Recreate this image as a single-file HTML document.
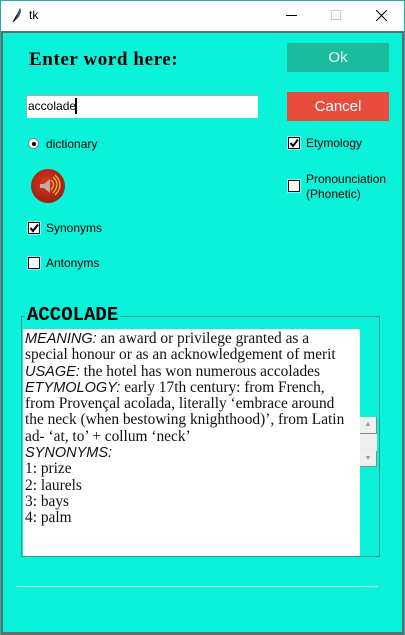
<!DOCTYPE html>
<html><head><style>
*{margin:0;padding:0;box-sizing:border-box}
body{width:405px;height:635px;background:#fff;position:relative;overflow:hidden;font-family:"Liberation Sans",sans-serif}
.a{position:absolute}
.t{font-size:12px;color:#000;white-space:nowrap}
.cb{position:absolute;width:12px;height:12px;background:#fff;border:1px solid #000;box-shadow:0 0 0 1px #8ee}
.cb svg{position:absolute;left:0;top:0}
.txt{font-family:"Liberation Serif",serif;font-size:15.4px;line-height:16.3px;color:#111;white-space:nowrap}
.txt i{font-family:"Liberation Sans",sans-serif;font-size:14.5px}
</style></head><body>
<div class="a" style="left:0;top:0;width:405px;height:1px;background:#1ab3a0"></div>
<div class="a" style="left:0;top:0;width:1px;height:635px;background:#1ab3a0"></div>
<div class="a" style="left:404px;top:0;width:1px;height:635px;background:#1ab3a0"></div>
<svg class="a" style="left:12px;top:7px" width="10" height="16" viewBox="0 0 10 16"><path d="M2 14 L8 2 Q9 6 6 10 L3 13Z" fill="#3a6fd8" stroke="#123" stroke-width="0.8"/><line x1="1" y1="15" x2="5" y2="8" stroke="#000" stroke-width="1"/></svg>
<div class="a t" style="left:29px;top:8px;font-size:12px">tk</div>
<div class="a" style="left:286px;top:15px;width:11px;height:1px;background:#000"></div>
<div class="a" style="left:331px;top:10px;width:10px;height:10px;border:1px solid #ccc"></div>
<svg class="a" style="left:376px;top:10px" width="11" height="11"><path d="M0 0L11 11M11 0L0 11" stroke="#000" stroke-width="1"/></svg>
<div class="a" style="left:1px;top:31px;width:403px;height:604px;background:#5f6f6c"></div>
<div class="a" style="left:3px;top:33px;width:399px;height:599px;background:#0af2d9"></div>

<div class="a" style="left:29px;top:49px;font-family:'Liberation Serif',serif;font-weight:bold;font-size:19px;letter-spacing:0.6px;white-space:nowrap">Enter word here:</div>
<div class="a" style="left:287px;top:43px;width:102px;height:29px;background:#1abc9c;color:#eef;font-size:15px;text-align:center;line-height:29px">Ok</div>
<div class="a" style="left:287px;top:92px;width:102px;height:29px;background:#e74c3c;color:#fff;font-size:15px;text-align:center;line-height:29px">Cancel</div>
<div class="a" style="left:26px;top:95px;width:232px;height:23px;background:#fff;border-top:1px solid #aaa;border-left:1px solid #aaa"></div>
<div class="a t" style="left:28px;top:99px">accolade</div>
<div class="a" style="left:75px;top:98px;width:1.5px;height:16px;background:#000"></div>

<div class="a" style="left:28px;top:138px;width:11px;height:11px;border-radius:50%;background:#fff;border:1px solid #888"></div>
<div class="a" style="left:31.5px;top:141.5px;width:4px;height:4px;border-radius:50%;background:#000"></div>
<div class="a t" style="left:46px;top:137px">dictionary</div>

<div class="a" style="left:31px;top:169px;width:34px;height:34px;border-radius:50%;background:radial-gradient(circle at 45% 40%,#d23a1e,#a0200e 70%,#7a1808)"></div>
<svg class="a" style="left:36px;top:174px" width="26" height="24" viewBox="0 0 26 24"><path d="M4 10h4l6-5v14l-6-5H4z" fill="#c8a89a"/><path d="M15 6q5 4 0 10M17 3q8 7 0 16M19 1q10 10 0 20" stroke="#e8b040" stroke-width="1.3" fill="none"/></svg>

<div class="cb" style="left:28px;top:222px"><svg width="10" height="10"><path d="M1.5 5l2.5 3 5-6.5" stroke="#000" stroke-width="2" fill="none"/></svg></div>
<div class="a t" style="left:46px;top:221px">Synonyms</div>
<div class="cb" style="left:28px;top:257px"></div>
<div class="a t" style="left:46px;top:256px">Antonyms</div>

<div class="cb" style="left:288px;top:137px"><svg width="10" height="10"><path d="M1.5 5l2.5 3 5-6.5" stroke="#000" stroke-width="2" fill="none"/></svg></div>
<div class="a t" style="left:306px;top:136px">Etymology</div>
<div class="cb" style="left:288px;top:180px"></div>
<div class="a t" style="left:306px;top:172px;line-height:15px">Pronounciation<br>(Phonetic)</div>

<div class="a" style="left:21px;top:316px;width:359px;height:241px;border:1px solid #2a9a8e"></div>
<div class="a" style="left:25px;top:304px;padding:0 2px;background:#0af2d9;font-family:'Liberation Mono',monospace;font-weight:bold;font-size:19px;line-height:22px">ACCOLADE</div>
<div class="a" style="left:23px;top:329px;width:337px;height:227px;background:#fff"></div>
<div class="a txt" style="left:25px;top:331px">
<i>MEANING:</i> an award or privilege granted as a<br>special honour or as an acknowledgement of merit<br><i>USAGE:</i> the hotel has won numerous accolades<br><i>ETYMOLOGY:</i> early 17th century: from French,<br>from Provençal acolada, literally ‘embrace around<br>the neck (when bestowing knighthood)’, from Latin<br>ad- ‘at, to’ + collum ‘neck’<br><i>SYNONYMS:</i><br>1: prize<br>2: laurels<br>3: bays<br>4: palm</div>
<div class="a" style="left:360px;top:417px;width:17px;height:50px;background:#eee"></div>
<div class="a" style="left:360px;top:417px;width:17px;height:17px;background:#f0f0f0;border-right:1px solid #888;border-bottom:1px solid #888;text-align:center;font-size:7px;color:#999;line-height:16px">▲</div>
<div class="a" style="left:360px;top:451px;width:17px;height:16px;background:#f0f0f0;border-right:1px solid #888;border-bottom:1px solid #888;text-align:center;font-size:7px;color:#999;line-height:15px">▼</div>
<div class="a" style="left:16px;top:586px;width:362px;height:1px;background:#cfe"></div>
</body></html>
